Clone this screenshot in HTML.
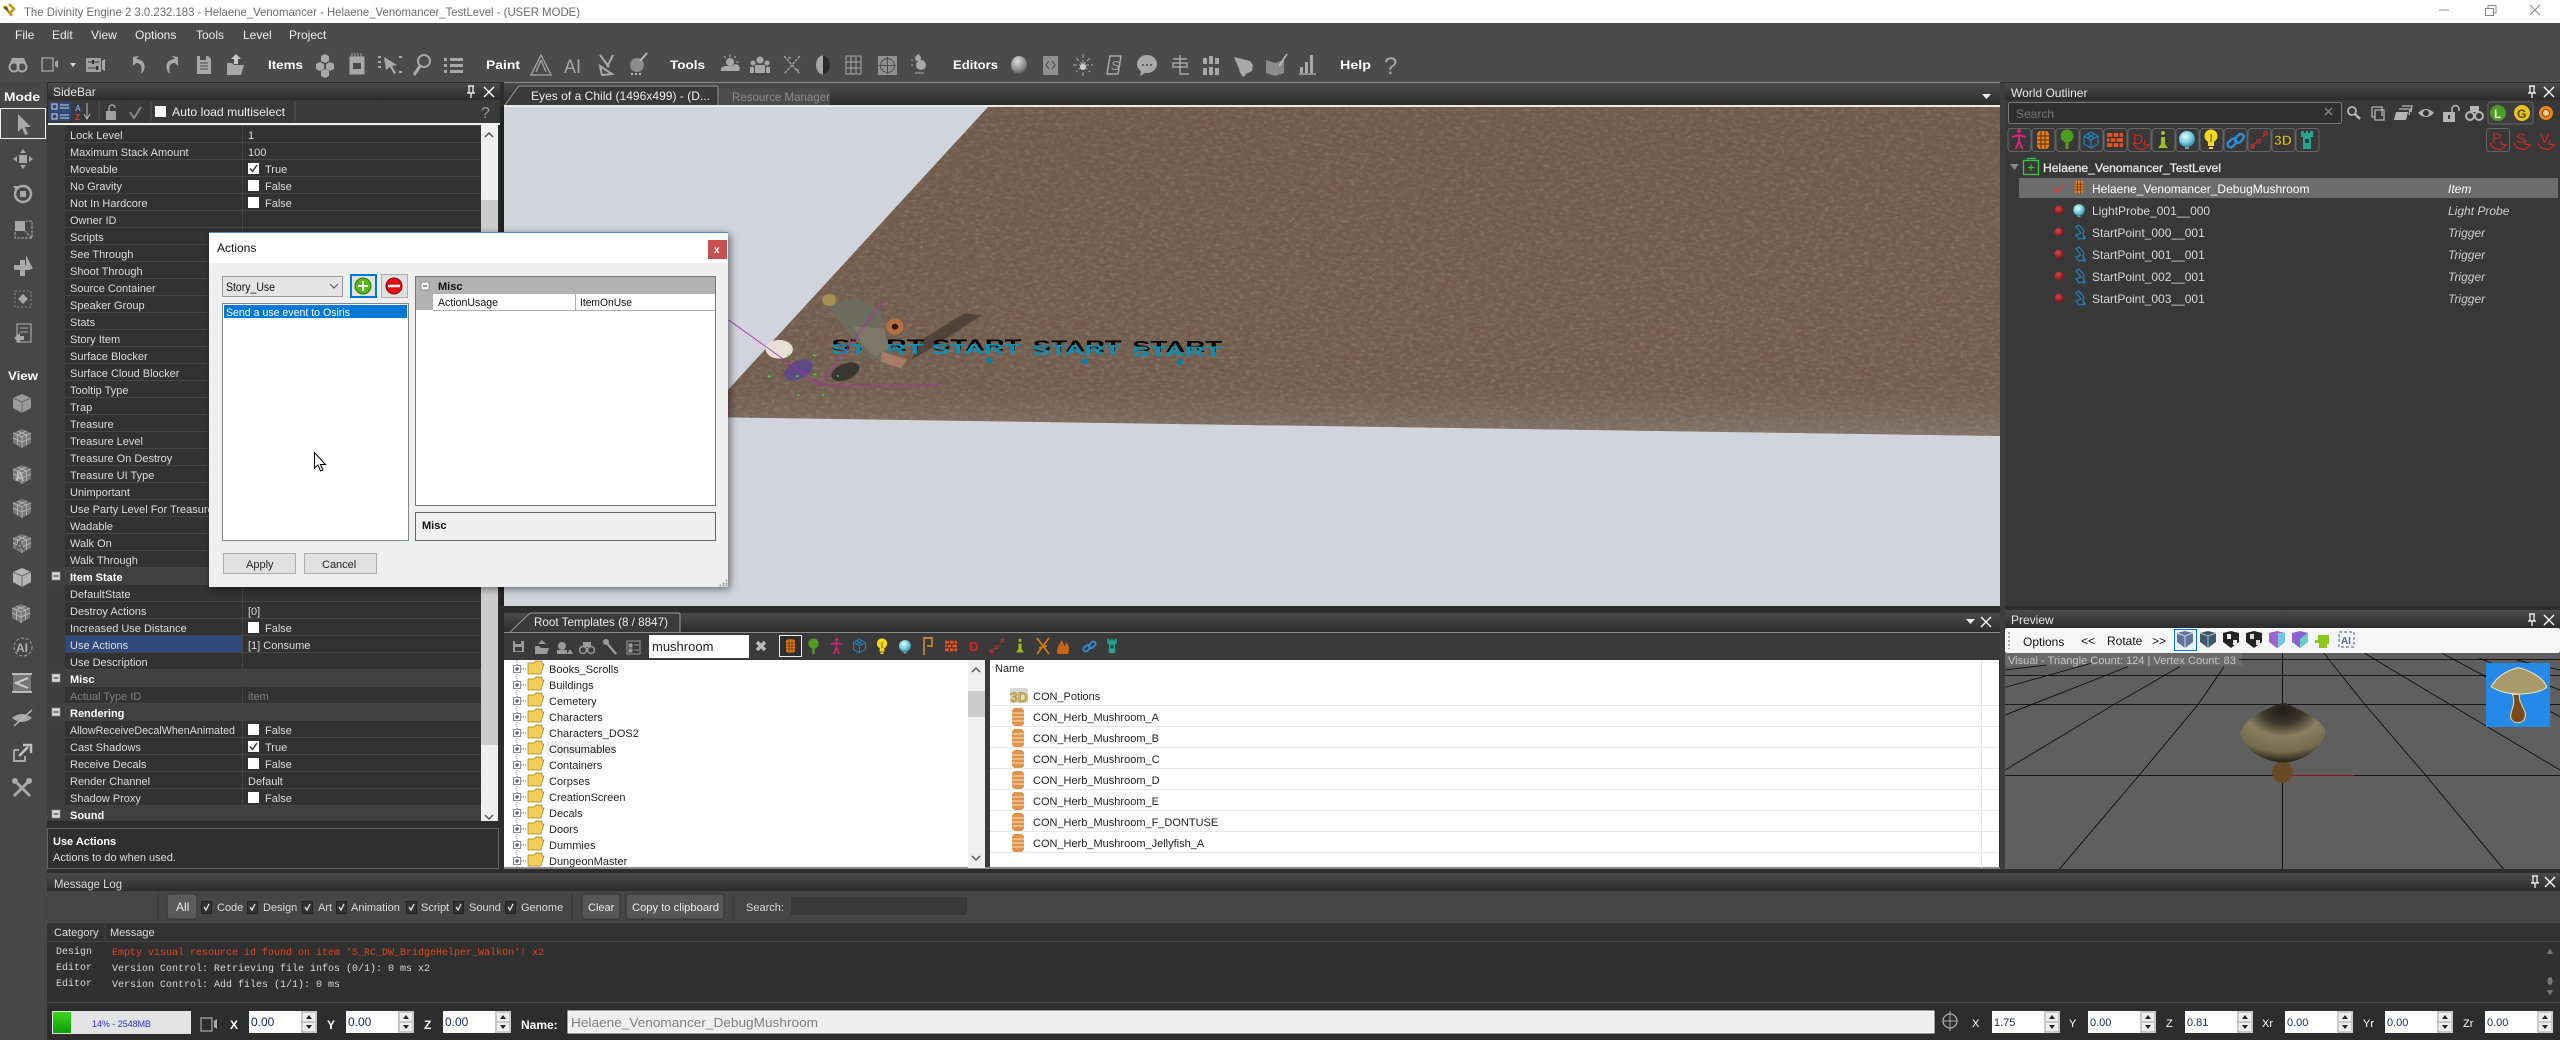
<!DOCTYPE html>
<html><head><meta charset="utf-8"><title>The Divinity Engine 2</title>
<style>
html,body{margin:0;padding:0;background:#2d2d2d;overflow:hidden}
svg{display:block}
text{font-family:"Liberation Sans",sans-serif;font-size:11px;fill:#dcdcdc}
.m{font-size:12px;fill:#ececec}
.b{font-weight:bold}
.w{fill:#fff}
.k{fill:#111}
.v{fill:#222}
.lg{font-family:"Liberation Mono",monospace;font-size:10px;fill:#d8d8d8}
.t{font-size:12px;fill:#d8d8d8}
.ty{font-size:12px;font-style:italic;fill:#cfcfcf}
.in{font-size:11px;fill:#1a2a66}
</style></head><body>
<svg width="2560" height="1040" viewBox="0 0 2560 1040" xmlns="http://www.w3.org/2000/svg">
<defs>
<linearGradient id="hd" x1="0" y1="0" x2="0" y2="1"><stop offset="0" stop-color="#4b4b4b"/><stop offset="1" stop-color="#2c2c2c"/></linearGradient>
<linearGradient id="fog" x1="0" y1="0" x2="0" y2="1"><stop offset="0" stop-color="#5e4a3c" stop-opacity=".12"/><stop offset=".8" stop-color="#6e5a4b" stop-opacity="0"/><stop offset="1" stop-color="#a09a96" stop-opacity=".4"/></linearGradient>
<linearGradient id="grn" x1="0" y1="0" x2="0" y2="1"><stop offset="0" stop-color="#37d81c"/><stop offset="1" stop-color="#149a08"/></linearGradient>
<radialGradient id="cap" cx=".5" cy=".12" r=".85"><stop offset="0" stop-color="#1e1c18"/><stop offset=".28" stop-color="#3e392c"/><stop offset=".52" stop-color="#8a7f60"/><stop offset=".82" stop-color="#746a4c"/><stop offset="1" stop-color="#2e2a1e"/></radialGradient>
<radialGradient id="pr" cx=".4" cy=".35" r=".7"><stop offset="0" stop-color="#e8fbff"/><stop offset=".6" stop-color="#6fc7dc"/><stop offset="1" stop-color="#2a7f96"/></radialGradient>
<radialGradient id="rd" cx=".4" cy=".35" r=".7"><stop offset="0" stop-color="#d84848"/><stop offset="1" stop-color="#7a0f12"/></radialGradient>
<radialGradient id="orb" cx=".4" cy=".3" r=".8"><stop offset="0" stop-color="#e0e0e0"/><stop offset=".7" stop-color="#808080"/><stop offset="1" stop-color="#3a3a3a"/></radialGradient>
<filter id="noise" x="0" y="0" width="100%" height="100%"><feTurbulence type="fractalNoise" baseFrequency=".16 .3" numOctaves="4" seed="7"/><feColorMatrix values="0 0 0 0 .28  0 0 0 0 .22  0 0 0 0 .17  .8 0 0 0 -.32"/></filter>
<filter id="noise2" x="0" y="0" width="100%" height="100%"><feTurbulence type="fractalNoise" baseFrequency=".2 .34" numOctaves="3" seed="3"/><feColorMatrix values="0 0 0 0 .56  0 0 0 0 .47  0 0 0 0 .39  .7 0 0 0 -.37"/></filter>
<filter id="sh" x="-5%" y="-5%" width="110%" height="110%"><feDropShadow dx="2" dy="2" stdDeviation="4" flood-color="#000" flood-opacity=".5"/></filter>
<clipPath id="floor"><path d="M988 107H2000V436L703 417Z"/></clipPath>
<clipPath id="vp"><rect x="504" y="107" width="1496" height="499"/></clipPath>
<pattern id="rows" x="0" y="126" width="10" height="17" patternUnits="userSpaceOnUse"><rect width="10" height="17" fill="#323232"/><rect y="16" width="10" height="1" fill="#454545"/></pattern>

<g id="pin"><path d="M-3-6H3M-2-6V1H2V-6M-4 1H4M0 1V6" stroke="#fff" stroke-width="1.2" fill="none"/></g>
<g id="x"><path d="M-5-5L5 5M5-5L-5 5" stroke="#fff" stroke-width="1.4"/></g>
<g id="bar"><rect x="-6" y="-9" width="12" height="18" rx="3.5" fill="#e8801a"/><path d="M-6-4H6M-6 0H6M-6 4H6M-2-9V9M2-9V9" stroke="#5a3208" stroke-width="1" fill="none"/></g>
<g id="bar2"><rect x="-6" y="-9" width="12" height="18" rx="3.5" fill="#de924a"/><path d="M-6-4H6M-6 0H6M-6 4H6" stroke="#f4d3b0" stroke-width="1.2" fill="none"/></g>
<g id="tree"><path d="M-1.5 10V1H1.5V10Z" fill="#5a9a2a"/><circle cy="-3" r="6.5" fill="#4f9a20"/></g>
<g id="man"><circle cy="-8" r="2" fill="#d6247c"/><path d="M0-5V2M0 2L-3.5 10M0 2L3.5 10M-7-2L0-4L7-2" stroke="#d6247c" stroke-width="2" fill="none"/></g>
<g id="cube"><path d="M0-8L7-4V4L0 8L-7 4V-4ZM-7-4L0 0L7-4M0 0V8M-3.5-6L3.5-2M3.5-6L-3.5-2" stroke="#1e86c8" stroke-width="1.1" fill="none"/></g>
<g id="brick"><rect x="-8" y="-7" width="16" height="14" fill="#e2542a"/><path d="M-8-2.5H8M-8 2.5H8M-2-7V-2.500M4-7V-2.500M-5-2.500V2.500M1-2.500V2.500M-2 2.500V7M4 2.500V7" stroke="#33302e" stroke-width="1.2"/></g>
<g id="info"><circle cy="-7" r="2" fill="#9abf1e"/><path d="M-2-3H2V4L5 8H-5L-2 4Z" fill="#9abf1e"/></g>
<g id="probe"><circle r="8" fill="url(#pr)"/><path d="M-2 8H2V10H-2Z" fill="#7a9aa6"/></g>
<g id="bulb"><circle cy="-3" r="6.500" fill="#f5d81e"/><path d="M-3 3H3V7H-3ZM-2 8H2V10H-2Z" fill="#f5d81e"/><path d="M0-5V3" stroke="#5a5000"/></g>
<g id="link"><g stroke="#2f8fd8" stroke-width="2.400" fill="none"><rect x="-8" y="-3" width="10" height="6" rx="3" transform="rotate(-45 -3 3) translate(0 3)"/><rect x="-2" y="-4" width="10" height="6" rx="3" transform="rotate(-45 3 -3)"/></g></g>
<g id="pth"><path d="M-7 7L-2 2M1 0L6-6" stroke="#d62c2c" stroke-dasharray="2 1.500" fill="none"/><path d="M-8 5h3v3h-3zM-2 0h3v3h-3zM5-8h3v3h-3z" fill="none" stroke="#d62c2c"/></g>
<g id="tower"><path d="M-6-9H-3V-7H-1V-9H1V-7H3V-9H6V-3H4V9H-4V-3H-6Z" fill="#2aa28e"/><rect x="-2" y="-1" width="4" height="4" fill="#0d4d44"/></g>
<g id="scr"><path d="M-8 2C-6 8 0 9 4 8L8 4L3 3L4-1" fill="none" stroke="#d82424" stroke-width="1.200"/></g>
<g id="fold"><path d="M0 2H6L8 0H14V3H16L13 13H0Z" fill="#f5cd5a" stroke="#a87c18" stroke-width=".7"/></g>
<g id="plus"><rect x="-3.500" y="-3.500" width="7" height="7" fill="#fff" stroke="#8a8a9a"/><path d="M-2 0H2M0-2V2" stroke="#334"/><path d="M4 0H9" stroke="#777" stroke-dasharray="1 1"/></g>
<g id="chk"><rect width="11" height="11" fill="#fff"/><path d="M2 5.500L4.500 8.500L9 2" stroke="#333" stroke-width="1.400" fill="none"/></g>
<g id="box"><rect width="11" height="11" fill="#fff"/></g>
<g id="minus"><rect width="8" height="8" fill="#d8d8d8" stroke="#999" stroke-width=".6"/><path d="M1.500 4H6.500" stroke="#222"/></g>
<g id="spin"><rect width="68" height="22" fill="#fff"/><rect x="52" width="16" height="22" fill="#c8c8c8"/><rect x="54" y="2" width="12" height="8" fill="#eee"/><rect x="54" y="12" width="12" height="8" fill="#eee"/><path d="M57 8L60 4L63 8ZM57 14L60 18L63 14Z" fill="#222"/></g>
<g id="dot"><circle r="4.500" fill="url(#rd)"/></g>
<g id="tri"><path d="M0-7L5-1L4 2L6 6L0 7L-3 3L2 1L-3-5Z" fill="none" stroke="#1e86c8" stroke-width="1.100"/><path d="M5 3V8M3 6H7" stroke="#1e86c8"/></g>
<g id="cb" fill="#9a9a9a"><path d="M0-9L9-5V5L0 10L-9 5V-5Z"/><path d="M-9-5L0-1L9-5M0-1V10" stroke="#666" fill="none"/></g>
<g id="cw"><path d="M0-9L9-5V5L0 10L-9 5V-5Z" fill="#777"/><path d="M-9-5L0-1L9-5M0-1V10M-9 0L0 4L9 0M-4.500-7L4.500-3M4.500-7L-4.500-3M-4.500-3V7M4.500-3V7" stroke="#b2b2b2" fill="none"/></g>
</defs>

<!-- base -->
<rect width="2560" height="1040" fill="#2d2d2d"/>
<rect width="2560" height="23" fill="#fff"/>
<path d="M4 6L12 16M9 4L14 9L10 13" stroke="#c89414" stroke-width="2.500" fill="none"/><path d="M3 8L7 6L9 12Z" fill="#6a5a10"/>
<text x="24" y="16" class="t" style="fill:#6b6b6b" textLength="556" lengthAdjust="spacingAndGlyphs">The Divinity Engine 2 3.0.232.183 - Helaene_Venomancer - Helaene_Venomancer_TestLevel - (USER MODE)</text>
<path d="M2439 10H2449" stroke="#999"/><path d="M2485.500 8.500H2493.500V15.500H2485.500ZM2488 8V5.500H2496V13H2494" fill="none" stroke="#888"/><path d="M2530 5L2540 15M2540 5L2530 15" stroke="#888"/>
<rect y="23" width="2560" height="59" fill="#4b4b4b"/>

<text x="15" y="39" class="m">File</text><text x="52" y="39" class="m">Edit</text><text x="91" y="39" class="m">View</text><text x="135" y="39" class="m">Options</text><text x="196" y="39" class="m">Tools</text><text x="243" y="39" class="m">Level</text><text x="289" y="39" class="m">Project</text>

<!-- top toolbar -->
<g fill="#a8a8a8" stroke="none">
<g transform="translate(18 65)"><circle cx="-4" cy="2" r="4.500" fill="none" stroke="#a8a8a8" stroke-width="2"/><circle cx="4" cy="2" r="4.500" fill="none" stroke="#a8a8a8" stroke-width="2"/><path d="M-6-7H6L8-2H-8Z"/></g>
<path d="M42 58h11v13h-11z" fill="none" stroke="#a8a8a8" stroke-width="1.300"/><path d="M55 62l3-2v8l-3-2z"/>
<path d="M70 63h6l-3 4z" fill="#ddd"/>
<g transform="translate(95 65)"><rect x="-9" y="-7" width="15" height="14" fill="#a0a0a0"/><path d="M-7-3H4M-7 3H4" stroke="#3c3c3c"/><rect x="-3" y="-5" width="2" height="4" fill="#333"/><rect x="1" y="1" width="2" height="4" fill="#333"/><path d="M7-4l3-2v12l-3-2z"/></g>
<path d="M133 57v9l3-3c4 0 7 2 5 11c5-4 5-12-1-14c-2-1-3-1-4-1l3-3z"/>
<path d="M178 57v9l-3-3c-4 0-7 2-5 11c-5-4-5-12 1-14c2-1 3-1 4-1l-3-3z"/>
<path d="M197 56h11l3 3v15h-14z"/><path d="M200 63h8M200 66h8M200 69h8" stroke="#4b4b4b"/><rect x="200" y="56" width="6" height="4" fill="#4b4b4b"/>
<path d="M227 63h5l2 2h10l-3 10h-14z"/><path d="M236 54l5 5h-3v5h-4v-5h-3z" fill="#c9c9c9"/>
<text x="268" y="69" class="m b w" textLength="35" lengthAdjust="spacingAndGlyphs">Items</text>
<g transform="translate(325 66)"><path d="M-4-10L0-12L4-10L4-5L0-3L-4-5Z"/><path d="M-9-2L-5-4L-1-2V3L-5 5L-9 3Z"/><path d="M1-2L5-4L9-2V3L5 5L1 3Z"/><path d="M-4 5L0 3L4 5V10L0 12L-4 10Z"/></g>
<path d="M350 57h14v17h-14zM352 53v4M355 53v4M358 53v4M361 53v4" stroke="#a8a8a8"/><rect x="353" y="63" width="8" height="6" fill="#4b4b4b"/>
<path d="M384 57l13 8-5 1 4 7-2 1-4-7-4 3z"/><path d="M378 57h3M378 62h3M378 67h3M399 57h3M399 72h3" stroke="#a8a8a8" stroke-width="2"/>
<circle cx="424" cy="61" r="6" fill="none" stroke="#a8a8a8" stroke-width="2"/><path d="M420 66l-6 9" stroke="#a8a8a8" stroke-width="3"/>
<path d="M444 58h3v3h-3zM450 58h13v3h-13zM444 64h3v3h-3zM450 64h13v3h-13zM444 70h3v3h-3zM450 70h13v3h-13z"/>
<text x="486" y="69" class="m b w" textLength="34" lengthAdjust="spacingAndGlyphs">Paint</text>
<path d="M541 55l10 20h-20zM541 60l-5 12M541 60l5 12" fill="none" stroke="#a8a8a8" stroke-width="1.300"/>
<text x="564" y="73" style="font-size:19px;fill:#a8a8a8" textLength="17" lengthAdjust="spacingAndGlyphs">AI</text>
<path d="M600 55l9 12M613 55l-6 12M600 66l12 8-10 1z" fill="none" stroke="#a8a8a8" stroke-width="2"/>
<g transform="translate(637 65)"><circle r="7" fill="#8c8c8c"/><path d="M3-4L10-12M-6 9h2M-2 9h2M2 9h2" stroke="#bbb" stroke-width="2"/></g>
<text x="670" y="69" class="m b w" textLength="35" lengthAdjust="spacingAndGlyphs">Tools</text>
<g transform="translate(730 65)"><path d="M-9 6a5 4 0 0 1 5-5h6a4 4 0 0 1 7 5z"/><circle cy="-3" r="4"/><path d="M0-11V-8M6-9L4-7M-6-9L-4-7M9-3H6" stroke="#a8a8a8"/></g>
<g transform="translate(760 65)"><circle cy="-5" r="3.500"/><circle cx="-7" cy="-2" r="2.500"/><circle cx="7" cy="-2" r="2.500"/><path d="M-5 8V0H5V8ZM-10 8V2H-6V8ZM6 8V2H10V8Z"/></g>
<path d="M784 56l16 18M800 56l-16 18M788 58h3M796 70h3" stroke="#a8a8a8" stroke-width="1.300" stroke-dasharray="3 1"/>
<ellipse cx="823" cy="65" rx="7" ry="9.500"/><path d="M823 55.500a7 9.500 0 0 1 0 19z" fill="#2a2a2a"/>
<path d="M846 56h15v18h-15zM851 56v18M856 56v18M846 62h15M846 68h15" fill="none" stroke="#a8a8a8"/>
<rect x="878" y="56" width="19" height="19" fill="#909090"/><circle cx="887.500" cy="65.500" r="7" fill="none" stroke="#4b4b4b"/><path d="M887.500 57V74M879 65.500H896" stroke="#4b4b4b"/>
<g transform="translate(919 65)"><circle r="5" cx="2"/><circle r="3" cx="-1" cy="-7"/><path d="M-4 8h9M-8-5h2M-8 0h2M0-11l-2 2" stroke="#a8a8a8"/></g>
<text x="953" y="69" class="m b w" textLength="45" lengthAdjust="spacingAndGlyphs">Editors</text>
<ellipse cx="1019" cy="65" rx="8" ry="9" fill="url(#orb)"/>
<rect x="1043" y="56" width="15" height="19" fill="#909090"/><path d="M1049 61l-3 4 3 4M1052 61l3 4-3 4" stroke="#444" fill="none"/>
<path d="M1083 54V76M1073 65H1093M1076 58L1090 72M1090 58L1076 72" stroke="#a8a8a8" stroke-dasharray="4 2"/><circle cx="1083" cy="67" r="3" fill="#ccc"/>
<path d="M1107 74l3-18h11l-3 18z" fill="none" stroke="#a8a8a8" stroke-width="1.500"/><text x="1111" y="70" style="font-size:13px;font-style:italic;fill:#a8a8a8">S</text>
<ellipse cx="1147" cy="64" rx="10" ry="9"/><path d="M1141 71l-1 5 5-3z"/><path d="M1142 65h2M1146 65h2M1150 65h2" stroke="#4b4b4b" stroke-width="1.500"/>
<path d="M1173 59h14M1173 63h14v4h-14zM1180 55v14M1180 69v5h9" fill="none" stroke="#a8a8a8" stroke-width="1.400"/>
<path d="M1203 58h4v6h-4zM1209 56h4v8h-4zM1215 58h4v6h-4zM1203 68h4v7h-4zM1209 67h4v8h-4zM1215 68h4v7h-4z"/>
<path d="M1234 57l16 4 3 4-1 6-8 4-2 1z"/><path d="M1239 71l7 4-3 2z"/>
<path d="M1266 60l9 3v13l-9-3zM1275 63l9-3v13l-9 3z" fill="#8a8a8a"/><path d="M1279 66l8-12" stroke="#c0c0c0" stroke-width="1.500"/>
<path d="M1299 74h17" stroke="#a8a8a8" stroke-width="1.500"/><path d="M1300 67h3v6h-3zM1305 62h3v11h-3zM1310 55h3v18h-3z"/>
<text x="1340" y="69" class="m b w" textLength="31" lengthAdjust="spacingAndGlyphs">Help</text>
<text x="1384" y="74" style="font-size:24px;fill:#a8a8a8">?</text>
</g>

<!-- left bar -->
<rect y="82" width="47" height="958" fill="#474747"/>
<text x="4" y="101" class="m b w" textLength="36" lengthAdjust="spacingAndGlyphs">Mode</text>
<rect x=".5" y="108.500" width="45" height="30" fill="#4b4b4b" stroke="#eee"/>
<g fill="#a8a8a8">
<path d="M18 114v18l4-4 3 7 3-1-3-7h6z"/>
<g transform="translate(23 159)"><path d="M0-10L3-6H-3ZM0 10L3 6H-3ZM-10 0L-6-3V3ZM10 0L6-3V3Z"/><rect x="-4" y="-4" width="8" height="8"/></g>
<g transform="translate(23 194)"><circle r="8" fill="none" stroke="#a8a8a8" stroke-width="2.500"/><rect x="-3" y="-3" width="6" height="6"/><path d="M-10-8l5 0-1 5z" fill="#a8a8a8"/></g>
<g transform="translate(23 229)"><rect x="-8" y="-8" width="10" height="10"/><path d="M-8 3v6h17v-17h-6M9 9L2 2" fill="none" stroke="#a8a8a8" stroke-dasharray="3 1"/></g>
<g transform="translate(23 265)"><path d="M3-10l7 14h-7z"/><path d="M-9 0h6v-5h5v5h5v5h-5v6h-5v-6h-6z"/></g>
<g transform="translate(23 299)"><rect x="-8" y="-8" width="16" height="16" fill="none" stroke="#8a8a8a" stroke-dasharray="2 2"/><path d="M0-5L5 0L0 5L-5 0Z"/></g>
<g transform="translate(23 334)"><rect x="-6" y="-10" width="14" height="18" fill="none" stroke="#a8a8a8" stroke-width="1.200"/><path d="M-3-6H5M-3-2H5" stroke="#a8a8a8"/><path d="M-9 4l6-5v3h4v4h-4v3z"/></g>
<text x="8" y="380" class="m b w" textLength="30" lengthAdjust="spacingAndGlyphs">View</text>
<use href="#cb" x="22" y="403"/><use href="#cw" x="22" y="438"/>
<use href="#cw" x="22" y="474"/><text x="15" y="481" class="b" style="font-size:13px;fill:#bdbdbd">A</text>
<use href="#cw" x="22" y="508"/><use href="#cw" x="22" y="543"/><text x="15" y="550" class="b" style="font-size:13px;fill:#5a5a5a">A</text>
<g transform="translate(22 577)"><path d="M0-9L9-5V5L0 10L-9 5V-5Z" fill="#b4b4b4"/><path d="M-9-5L0-1L9-5M0-1V10" stroke="#666" fill="none"/></g>
<use href="#cw" x="21" y="613"/>
<circle cx="23" cy="647" r="9" fill="none" stroke="#a0a0a0" stroke-dasharray="3 2"/><text x="16" y="652" class="b" style="font-size:12px;fill:#b0b0b0">AI</text>
<g transform="translate(22 683)"><rect x="-9" y="-9" width="18" height="18" fill="#777"/><path d="M-10-9H10M-10 9H10" stroke="#bbb" stroke-width="2"/><path d="M6-5L-6 0L6 5" fill="none" stroke="#ccc" stroke-width="2"/></g>
<g transform="translate(22 718)"><path d="M-10 0Q0-8 10 0Q0 8-10 0Z"/><path d="M-8 8L10-8" stroke="#bbb" stroke-width="1.500"/></g>
<g transform="translate(22 753)"><path d="M-8-3h5M3 3v5h-11v-11" fill="none" stroke="#a8a8a8" stroke-width="2"/><path d="M-3 3L6-6M1-8h8v8" fill="none" stroke="#c0c0c0" stroke-width="2.500"/></g>
<g transform="translate(22 788)"><path d="M-8-8L8 8M8-8L-8 8" stroke="#a8a8a8" stroke-width="3"/><circle cx="-7" cy="-7" r="3"/><circle cx="7" cy="-7" r="3"/></g>
</g>

<!-- sidebar -->
<rect x="48" y="83" width="452" height="17" fill="url(#hd)"/>
<text x="53" y="96" class="m" style="fill:#e2e2e2">SideBar</text>
<use href="#pin" x="471" y="92"/><use href="#x" x="489" y="92"/>
<rect x="48" y="100" width="452" height="23" fill="#3a3a3a"/>
<rect x="49" y="102" width="22" height="19" fill="#2e4a7c"/>
<path d="M52 104h5v5h-5zM52 114h5v5h-5zM60 105h9M60 108h9M60 115h9M60 118h9" fill="none" stroke="#d0d0d0"/>
<text x="75" y="111" style="font-size:8px;fill:#7aa0e0" class="b">A</text><text x="75" y="120" style="font-size:8px;fill:#d04040" class="b">Z</text><path d="M87 103V118M84 114l3 5 3-5" stroke="#bbb" fill="none"/>
<path d="M99 102V121M151 102V121M295 102V121" stroke="#555"/>
<path d="M106 111h10v9h-10z" fill="#a0a0a0"/><path d="M109 111v-3a3 3 0 0 1 6 0" stroke="#a0a0a0" fill="none" stroke-width="1.500"/>
<path d="M130 112l4 6 7-11" stroke="#8a8a8a" stroke-width="2" fill="none"/>
<rect x="155" y="106" width="11" height="11" fill="#fff"/>
<text x="172" y="116" class="m" textLength="113" lengthAdjust="spacingAndGlyphs">Auto load multiselect</text>
<text x="481" y="118" style="font-size:16px;fill:#999">?</text>
<rect x="48" y="123" width="452" height="2" fill="#f0f0f0"/>

<rect x="47" y="125" width="434" height="696" fill="url(#rows)"/>
<rect x="47" y="125" width="18" height="696" fill="#3e3e3e"/>
<rect x="242" y="125" width="1" height="696" fill="#474747"/>
<rect x="47" y="568" width="434" height="17" fill="#404040"/><rect x="47" y="670" width="434" height="17" fill="#404040"/><rect x="47" y="704" width="434" height="17" fill="#404040"/><rect x="47" y="806" width="434" height="15" fill="#404040"/>
<rect x="65" y="636" width="177" height="16" fill="#2e4a7c"/>
<g>
<text x="70" y="139">Lock Level</text><text x="248" y="139">1</text>
<text x="70" y="156">Maximum Stack Amount</text><text x="248" y="156">100</text>
<text x="70" y="173">Moveable</text><use href="#chk" x="248" y="163"/><text x="265" y="173">True</text>
<text x="70" y="190">No Gravity</text><use href="#box" x="248" y="180"/><text x="265" y="190">False</text>
<text x="70" y="207">Not In Hardcore</text><use href="#box" x="248" y="197"/><text x="265" y="207">False</text>
<text x="70" y="224">Owner ID</text><text x="70" y="241">Scripts</text><text x="70" y="258">See Through</text><text x="70" y="275">Shoot Through</text><text x="70" y="292">Source Container</text><text x="70" y="309">Speaker Group</text><text x="70" y="326">Stats</text><text x="70" y="343">Story Item</text><text x="70" y="360">Surface Blocker</text><text x="70" y="377">Surface Cloud Blocker</text><text x="70" y="394">Tooltip Type</text><text x="70" y="411">Trap</text><text x="70" y="428">Treasure</text><text x="70" y="445">Treasure Level</text><text x="70" y="462">Treasure On Destroy</text><text x="70" y="479">Treasure UI Type</text><text x="70" y="496">Unimportant</text><text x="70" y="513">Use Party Level For Treasure</text><text x="70" y="530">Wadable</text><text x="70" y="547">Walk On</text><text x="70" y="564">Walk Through</text>
<use href="#minus" x="52" y="572"/><text x="70" y="581" class="b w">Item State</text>
<text x="70" y="598">DefaultState</text>
<text x="70" y="615">Destroy Actions</text><text x="248" y="615">[0]</text>
<text x="70" y="632">Increased Use Distance</text><use href="#box" x="248" y="622"/><text x="265" y="632">False</text>
<text x="70" y="649">Use Actions</text><text x="248" y="649">[1] Consume</text>
<text x="70" y="666">Use Description</text>
<use href="#minus" x="52" y="674"/><text x="70" y="683" class="b w">Misc</text>
<text x="70" y="700" style="fill:#808080">Actual Type ID</text><text x="248" y="700" style="fill:#808080">item</text>
<use href="#minus" x="52" y="708"/><text x="70" y="717" class="b w">Rendering</text>
<text x="70" y="734" textLength="165" lengthAdjust="spacingAndGlyphs">AllowReceiveDecalWhenAnimated</text><use href="#box" x="248" y="724"/><text x="265" y="734">False</text>
<text x="70" y="751">Cast Shadows</text><use href="#chk" x="248" y="741"/><text x="265" y="751">True</text>
<text x="70" y="768">Receive Decals</text><use href="#box" x="248" y="758"/><text x="265" y="768">False</text>
<text x="70" y="785">Render Channel</text><text x="248" y="785">Default</text>
<text x="70" y="802">Shadow Proxy</text><use href="#box" x="248" y="792"/><text x="265" y="802">False</text>
<use href="#minus" x="52" y="810"/><text x="70" y="819" class="b w">Sound</text>
</g>
<rect x="481" y="125" width="17" height="696" fill="#efefef"/><rect x="481" y="200" width="17" height="545" fill="#cdcdcd"/>
<path d="M485 137l4-4 4 4M485 815l4 4 4-4" stroke="#555" stroke-width="1.500" fill="none"/>
<rect x="47.500" y="828.500" width="451" height="40" fill="#2f2f2f" stroke="#666"/>
<text x="53" y="845" class="b w">Use Actions</text><text x="53" y="861">Actions to do when used.</text>

<!-- viewport tabs -->
<rect x="504" y="82" width="1496" height="1" fill="#8a8a8a"/>
<rect x="504" y="83" width="1496" height="22" fill="url(#hd)"/>
<path d="M505 105L518 87Q519 86 521 86H716Q718 86 718 88V105" fill="#3a3a3a" stroke="#9a9a9a"/>
<text x="531" y="100" class="m" textLength="179" lengthAdjust="spacingAndGlyphs">Eyes of a Child (1496x499) - (D...</text>
<rect x="719" y="88" width="111" height="17" fill="#4c4c4c"/>
<text x="732" y="101" class="m" style="fill:#8c8c8c" textLength="98" lengthAdjust="spacingAndGlyphs">Resource Manager</text>
<path d="M1982 94h9l-4.500 5z" fill="#eee"/>
<rect x="504" y="105" width="1496" height="2" fill="#e8e8e8"/>
<rect x="500" y="107" width="4" height="499" fill="#222"/>

<!-- 3D viewport -->
<g clip-path="url(#vp)">
<rect x="504" y="107" width="1496" height="499" fill="#d1d4dd"/>
<g clip-path="url(#floor)">
<rect x="700" y="107" width="1300" height="330" fill="#715c4d"/>
<rect x="700" y="107" width="1300" height="330" filter="url(#noise)"/>
<rect x="700" y="107" width="1300" height="330" filter="url(#noise2)"/>
<rect x="700" y="107" width="1300" height="330" fill="url(#fog)"/>
</g>
<svg x="700" y="270" width="560" height="160" viewBox="0 0 1568 480" preserveAspectRatio="none">
<path d="M640 240L790 135L740 130L620 210L590 270Z" fill="#4a3d34" opacity=".85"/>
<text x="368" y="242" textLength="260" lengthAdjust="spacingAndGlyphs" style="font-size:48px;font-weight:bold;fill:#000">START</text>
<text x="650" y="242" textLength="250" lengthAdjust="spacingAndGlyphs" style="font-size:48px;font-weight:bold;fill:#000">START</text>
<text x="932" y="244" textLength="248" lengthAdjust="spacingAndGlyphs" style="font-size:48px;font-weight:bold;fill:#000">START</text>
<text x="1210" y="246" textLength="252" lengthAdjust="spacingAndGlyphs" style="font-size:48px;font-weight:bold;fill:#000">START</text>
<text x="366" y="252" textLength="260" lengthAdjust="spacingAndGlyphs" style="font-size:44px;font-weight:bold;fill:#0a90b4">START</text>
<text x="648" y="252" textLength="250" lengthAdjust="spacingAndGlyphs" style="font-size:44px;font-weight:bold;fill:#0a90b4">START</text>
<text x="930" y="255" textLength="248" lengthAdjust="spacingAndGlyphs" style="font-size:44px;font-weight:bold;fill:#0a90b4">START</text>
<text x="1208" y="260" textLength="252" lengthAdjust="spacingAndGlyphs" style="font-size:44px;font-weight:bold;fill:#0a90b4">START</text>
<circle cx="542" cy="269" r="9" fill="#0a7ea6"/><circle cx="810" cy="271" r="9" fill="#0a7ea6"/><circle cx="1078" cy="274" r="9" fill="#0a7ea6"/><circle cx="1344" cy="277" r="9" fill="#0a7ea6"/>
<path d="M360 110L395 95L445 85L510 130L505 175L515 230L540 250L505 270L470 262L435 210L395 160Z" fill="#6b6b5e"/>
<path d="M430 170L515 175L530 235L490 260L455 225Z" fill="#7d7868"/>
<path d="M510 245L580 268L562 295L505 275Z" fill="#a87a68"/>
<ellipse cx="362" cy="90" rx="20" ry="18" fill="#a89050"/>
<circle cx="546" cy="170" r="24" fill="#c8703a" opacity=".8"/><circle cx="546" cy="170" r="9" fill="#2a1a10"/>
<ellipse cx="222" cy="238" rx="38" ry="28" fill="#e8e0d4"/>
<ellipse cx="276" cy="300" rx="44" ry="26" fill="#5e4a84" transform="rotate(-30 276 300)"/>
<ellipse cx="407" cy="305" rx="42" ry="24" fill="#3a3630" transform="rotate(-25 407 305)"/>
<path d="M80 150L335 345L515 90M335 345H670" stroke="#b42ab4" stroke-width="2.500" fill="none"/>
<path d="M244 255l8 2M316 255l8 3M190 318l8 2M268 320l8-3M318 315l8-3M384 316l4 4M272 375l6 1M342 376l6-3" stroke="#2ef02e" stroke-width="4" fill="none"/>
</svg>
</g>

<!-- root templates -->
<rect x="504" y="613" width="1496" height="19" fill="url(#hd)"/>
<path d="M510 632L529 614Q530 613 532 613H678Q680 613 680 615V632" fill="#3a3a3a" stroke="#9a9a9a"/>
<text x="534" y="626" class="m" textLength="134" lengthAdjust="spacingAndGlyphs">Root Templates (8 / 8847)</text>
<path d="M1966 619h9l-4.500 5z" fill="#eee"/><use href="#x" x="1986" y="622"/>
<rect x="504" y="632" width="1496" height="1" fill="#8a8a8a"/>
<rect x="504" y="633" width="1496" height="27" fill="#3a3a3a"/>
<g fill="#9a9a9a">
<path d="M513 641h11v11h-11z"/><rect x="515" y="641" width="6" height="3" fill="#3a3a3a"/><rect x="515" y="647" width="7" height="4" fill="#3a3a3a"/>
<path d="M535 646h4l2 2h8l-2 6h-12z"/><path d="M542 640l4 4h-8z"/>
<circle cx="562" cy="646" r="4"/><path d="M557 654v-4h10v4zM570 649l3 5h-6z"/>
<circle cx="583" cy="650" r="3.500" fill="none" stroke="#9a9a9a" stroke-width="1.500"/><circle cx="591" cy="650" r="3.500" fill="none" stroke="#9a9a9a" stroke-width="1.500"/><rect x="583" y="642" width="8" height="5"/>
<path d="M605 641l11 13" stroke="#9a9a9a" stroke-width="2.500"/><circle cx="606" cy="642" r="3"/>
<rect x="627" y="641" width="13" height="13" fill="none" stroke="#9a9a9a"/><path d="M629 644h3v3h-3zM629 649h3v3h-3zM634 645h5M634 650h5" stroke="#9a9a9a"/>
</g>
<rect x="649" y="635" width="100" height="23" fill="#fff"/>
<text x="652" y="651" style="font-size:13px;fill:#222">mushroom</text>
<path d="M757 642l8 8M765 642l-8 8" stroke="#b8b8b8" stroke-width="3.500"/>
<rect x="779.500" y="635.500" width="22" height="21" fill="#2f2f2f" stroke="#eee"/>
<g>
<use href="#bar" transform="translate(790.500 646) scale(.75)"/>
<use href="#tree" transform="translate(813.500 646) scale(.8)"/>
<use href="#man" transform="translate(836.500 646) scale(.8)"/>
<use href="#cube" transform="translate(859.500 646) scale(.85)"/>
<use href="#bulb" transform="translate(882 646) scale(.8)"/>
<use href="#probe" transform="translate(905 646) scale(.75)"/>
<path d="M924 655V638h8v8h-5" fill="none" stroke="#b47b3a" stroke-width="2"/>
<use href="#brick" transform="translate(951 646) scale(.75)"/>
<text x="969" y="651" class="b" style="font-size:13px;fill:#d82424">D</text>
<use href="#pth" transform="translate(997 646) scale(.85)"/>
<use href="#info" transform="translate(1020 646) scale(.8)"/>
<path d="M1037 638l12 16M1049 638l-12 16M1039 648l8-2" stroke="#d07a18" stroke-width="1.800" fill="none"/>
<path d="M1058 654c-3-6 2-8 3-14c3 3 3 4 3 6c2-1 2-3 2-4c3 3 4 8 2 12z" fill="#c8641a"/>
<use href="#link" transform="translate(1089 646) scale(.75)"/>
<use href="#tower" transform="translate(1112 646) scale(.8)"/>
</g>

<rect x="504" y="660" width="481" height="208" fill="#fff"/>
<rect x="990" y="660" width="1009" height="208" fill="#fff"/>
<rect x="985" y="660" width="5" height="208" fill="#3a3a3a"/>
<rect x="504" y="867" width="1496" height="2" fill="#888"/>
<g fill="#000"><path d="M517 660V868" stroke="#888" stroke-dasharray="1 1"/>
<use href="#plus" x="517" y="669"/><use href="#fold" x="528" y="661"/><text x="549" y="673" class="v">Books_Scrolls</text>
<use href="#plus" x="517" y="685"/><use href="#fold" x="528" y="677"/><text x="549" y="689" class="v">Buildings</text>
<use href="#plus" x="517" y="701"/><use href="#fold" x="528" y="693"/><text x="549" y="705" class="v">Cemetery</text>
<use href="#plus" x="517" y="717"/><use href="#fold" x="528" y="709"/><text x="549" y="721" class="v">Characters</text>
<use href="#plus" x="517" y="733"/><use href="#fold" x="528" y="725"/><text x="549" y="737" class="v">Characters_DOS2</text>
<use href="#plus" x="517" y="749"/><use href="#fold" x="528" y="741"/><rect x="547" y="741" width="67" height="16" fill="#f0f0f0"/><text x="549" y="753" class="v">Consumables</text>
<use href="#plus" x="517" y="765"/><use href="#fold" x="528" y="757"/><text x="549" y="769" class="v">Containers</text>
<use href="#plus" x="517" y="781"/><use href="#fold" x="528" y="773"/><text x="549" y="785" class="v">Corpses</text>
<use href="#plus" x="517" y="797"/><use href="#fold" x="528" y="789"/><text x="549" y="801" class="v">CreationScreen</text>
<use href="#plus" x="517" y="813"/><use href="#fold" x="528" y="805"/><text x="549" y="817" class="v">Decals</text>
<use href="#plus" x="517" y="829"/><use href="#fold" x="528" y="821"/><text x="549" y="833" class="v">Doors</text>
<use href="#plus" x="517" y="845"/><use href="#fold" x="528" y="837"/><text x="549" y="849" class="v">Dummies</text>
<use href="#plus" x="517" y="861"/><use href="#fold" x="528" y="853"/><text x="549" y="865" class="v">DungeonMaster</text>
</g>
<rect x="968" y="660" width="17" height="208" fill="#f0f0f0"/><rect x="968" y="691" width="17" height="26" fill="#cdcdcd"/>
<path d="M972 672l4-4 4 4M972 856l4 4 4-4" stroke="#555" stroke-width="1.500" fill="none"/>
<text x="995" y="672" class="v">Name</text>
<path d="M990 705.500H1999M990 726.500H1999M990 747.500H1999M990 768.500H1999M990 789.500H1999M990 810.500H1999M990 831.500H1999M990 852.500H1999M1981.500 660V868" stroke="#e8e8e8"/>
<rect x="1010" y="688" width="18" height="15" rx="2" fill="#d8d8d8"/>
<text x="1010" y="702" class="b" style="font-size:14px;fill:#d8b838;stroke:#8a7a30;stroke-width:.4">3D</text>
<text x="1033" y="700" class="v">CON_Potions</text>
<use href="#bar2" x="1018" y="717"/><text x="1033" y="721" class="v">CON_Herb_Mushroom_A</text>
<use href="#bar2" x="1018" y="738"/><text x="1033" y="742" class="v">CON_Herb_Mushroom_B</text>
<use href="#bar2" x="1018" y="759"/><text x="1033" y="763" class="v">CON_Herb_Mushroom_C</text>
<use href="#bar2" x="1018" y="780"/><text x="1033" y="784" class="v">CON_Herb_Mushroom_D</text>
<use href="#bar2" x="1018" y="801"/><text x="1033" y="805" class="v">CON_Herb_Mushroom_E</text>
<use href="#bar2" x="1018" y="822"/><text x="1033" y="826" class="v">CON_Herb_Mushroom_F_DONTUSE</text>
<use href="#bar2" x="1018" y="843"/><text x="1033" y="847" class="v">CON_Herb_Mushroom_Jellyfish_A</text>

<!-- world outliner -->
<rect x="2000" y="83" width="5" height="787" fill="#3d3d3d"/>
<rect x="2005" y="83" width="555" height="17" fill="url(#hd)"/>
<text x="2011" y="97" class="m" style="fill:#e8e8e8">World Outliner</text>
<use href="#pin" x="2532" y="92"/><use href="#x" x="2549" y="92"/>
<rect x="2005" y="100" width="555" height="506" fill="#383838"/>
<rect x="2008.500" y="102.500" width="333" height="21" rx="2" fill="#2f2f2f" stroke="#7a7a7a"/>
<text x="2016" y="118" class="m" style="fill:#777">Search</text>
<path d="M2325 108l7 7M2332 108l-7 7" stroke="#888" stroke-width="1.300"/>
<g fill="#b4b4b4">
<circle cx="2352" cy="111" r="4" fill="none" stroke="#b4b4b4" stroke-width="1.800"/><path d="M2355 114l5 5" stroke="#b4b4b4" stroke-width="2.500"/>
<path d="M2372 107h10v9M2375 110h9v10h-9zM2372 107v10h3" fill="none" stroke="#b4b4b4" stroke-width="1.300"/>
<path d="M2396 112h12l-2 8h-12z"/><path d="M2399 109h11l-1 6M2402 106h10l-1 6" fill="none" stroke="#b4b4b4" stroke-width="1.300"/>
<path d="M2418 113Q2426 105 2434 113Q2426 121 2418 113Z"/><circle cx="2426" cy="113" r="3" fill="#333"/>
<path d="M2443 112h12v10h-12z"/><path d="M2452 112v-3a3.500 3.500 0 0 1 7 0v2" fill="none" stroke="#b4b4b4" stroke-width="1.500"/><rect x="2448" y="115" width="2" height="4" fill="#333"/>
<circle cx="2470" cy="116" r="4" fill="none" stroke="#b4b4b4" stroke-width="2"/><circle cx="2479" cy="116" r="4" fill="none" stroke="#b4b4b4" stroke-width="2"/><rect x="2470" y="106" width="9" height="6"/>
</g>
<rect x="2488" y="102" width="45" height="22" rx="2" fill="#3d3d3d" stroke="#666"/>
<circle cx="2498" cy="113" r="8" fill="#4f9a2a"/><text x="2494" y="118" class="b" style="font-size:12px;fill:#e6f0c0">L</text>
<circle cx="2522" cy="113" r="8" fill="#e8c420"/><text x="2517" y="118" class="b" style="font-size:12px;fill:#5a4a08">G</text>
<circle cx="2546" cy="113" r="7" fill="#e6881e"/><circle cx="2546" cy="113" r="3.500" fill="#f0d090" stroke="#8a4a08"/>
<g fill="none" stroke="#666"><rect x="2008" y="128.500" width="23" height="23" rx="3"/><rect x="2032" y="128.500" width="23" height="23" rx="3"/><rect x="2056" y="128.500" width="23" height="23" rx="3"/><rect x="2080" y="128.500" width="23" height="23" rx="3"/><rect x="2104" y="128.500" width="23" height="23" rx="3"/><rect x="2128" y="128.500" width="23" height="23" rx="3"/><rect x="2152" y="128.500" width="23" height="23" rx="3"/><rect x="2176" y="128.500" width="23" height="23" rx="3"/><rect x="2200" y="128.500" width="23" height="23" rx="3"/><rect x="2224" y="128.500" width="23" height="23" rx="3"/><rect x="2248" y="128.500" width="23" height="23" rx="3"/><rect x="2272" y="128.500" width="23" height="23" rx="3"/><rect x="2296" y="128.500" width="23" height="23" rx="3"/><rect x="2486.500" y="128.500" width="23" height="23" rx="3"/></g>
<use href="#man" x="2019" y="139"/><use href="#bar" x="2043" y="140"/><use href="#tree" x="2067" y="139"/><use href="#cube" x="2091" y="140"/><use href="#brick" x="2115" y="140"/>
<text x="2133" y="144" style="font-size:14px;fill:#d82424">D</text><use href="#scr" x="2141" y="141"/>
<use href="#info" x="2163" y="140"/><use href="#probe" x="2187" y="139"/><use href="#bulb" x="2211" y="139"/><use href="#link" x="2235" y="140"/><use href="#pth" x="2259" y="140"/>
<text x="2274" y="145" class="b" style="font-size:14px;fill:#e0c030;stroke:#3a3000;stroke-width:.5">3D</text>
<use href="#tower" x="2307" y="140"/>
<text x="2492" y="143" style="font-size:14px;fill:#d82424">P</text><use href="#scr" x="2498" y="141"/>
<text x="2516" y="143" style="font-size:14px;fill:#d82424">S</text><use href="#scr" x="2522" y="141"/>
<text x="2540" y="143" style="font-size:14px;fill:#d82424">V</text><use href="#scr" x="2546" y="141"/>

<path d="M2010 164h9l-4.500 6z" fill="#888"/>
<rect x="2023.500" y="160.500" width="15" height="14" fill="none" stroke="#3ac83a" stroke-width="1.300"/><path d="M2027 158.500H2036M2028 167.500h6M2031 164.500v6" stroke="#3ac83a" stroke-width="1.200"/>
<text x="2043" y="172" class="t" textLength="178" lengthAdjust="spacingAndGlyphs" style="fill:#e6e6e6;stroke:#e6e6e6;stroke-width:.3">Helaene_Venomancer_TestLevel</text>
<rect x="2019" y="178" width="539" height="20" fill="#6c6c6c"/>
<path d="M2054 188l3 4 7-8" stroke="#e04030" stroke-width="1.600" fill="none"/>
<use href="#bar" transform="translate(2079 187) scale(.72)"/>
<text x="2092" y="193" class="t" style="fill:#fff">Helaene_Venomancer_DebugMushroom</text><text x="2448" y="193" class="ty" style="fill:#fff">Item</text>
<use href="#dot" x="2059" y="210"/><use href="#probe" transform="translate(2079 210) scale(.72)"/><text x="2092" y="215" class="t">LightProbe_001__000</text><text x="2448" y="215" class="ty">Light Probe</text>
<use href="#dot" x="2059" y="232"/><use href="#tri" x="2079" y="232"/><text x="2092" y="237" class="t">StartPoint_000__001</text><text x="2448" y="237" class="ty">Trigger</text>
<use href="#dot" x="2059" y="254"/><use href="#tri" x="2079" y="254"/><text x="2092" y="259" class="t">StartPoint_001__001</text><text x="2448" y="259" class="ty">Trigger</text>
<use href="#dot" x="2059" y="276"/><use href="#tri" x="2079" y="276"/><text x="2092" y="281" class="t">StartPoint_002__001</text><text x="2448" y="281" class="ty">Trigger</text>
<use href="#dot" x="2059" y="298"/><use href="#tri" x="2079" y="298"/><text x="2092" y="303" class="t">StartPoint_003__001</text><text x="2448" y="303" class="ty">Trigger</text>

<!-- preview -->
<rect x="2005" y="610" width="555" height="18" fill="url(#hd)"/>
<text x="2011" y="624" class="m" style="fill:#e8e8e8">Preview</text>
<use href="#pin" x="2532" y="620"/><use href="#x" x="2549" y="620"/>
<rect x="2005" y="628" width="555" height="25" rx="2" fill="#f6f6f6"/>
<path d="M2009 632v17" stroke="#aaa" stroke-width="2" stroke-dasharray="2 2"/>
<text x="2023" y="646" class="m k">Options</text><text x="2081" y="645" class="m k">&lt;&lt;</text><text x="2107" y="645" class="m k">Rotate</text><text x="2152" y="645" class="m k">&gt;&gt;</text>
<rect x="2174.500" y="629.500" width="22" height="21" fill="#e8f2fb" stroke="#0a78d0"/>
<path d="M2177 633l8-2 8 2v9l-8 6-8-6z" fill="#66729a"/><path d="M2177 633l8 3 8-3M2185 636v12" stroke="#cdd4e8" fill="none"/>
<path d="M2200 633l8-2 8 2v9l-8 6-8-6z" fill="#3e5a6a"/><path d="M2200 633l8 3 8-3M2208 636v12" stroke="#a8c0cc" fill="none"/>
<path d="M2223 633l8-2 8 2v9l-8 6-8-6z" fill="#222"/><path d="M2227 634h4v5h-4zM2233 640h4v5h-4z" fill="#eee"/>
<path d="M2246 633l8-2 8 2v9l-8 6-8-6z" fill="#222"/><path d="M2250 634h4v5h-4zM2256 640h4v5h-4z" fill="#ddd"/>
<path d="M2269 633l8-2 8 2v9l-8 6-8-6z" fill="#a060d0"/><path d="M2278 633l7 0v9l-7 6z" fill="#70c8e0"/>
<path d="M2292 633l8-2 8 2v9l-8 6-8-6z" fill="#9060d0"/><path d="M2300 639l8-6v9l-8 6z" fill="#60d0c8"/>
<path d="M2318 635h11v9h-2v4h-8v-5h-4v-3h3z" fill="#8ac820"/>
<rect x="2339" y="632" width="15" height="15" fill="none" stroke="#4a5a98" stroke-dasharray="3 2"/><text x="2341" y="644" class="b" style="font-size:10px;fill:#5a6aa8">AI</text>
<rect x="2005" y="653" width="555" height="216" fill="#5f5f5f"/>
<svg x="1980" y="600" width="580" height="280" viewBox="0 0 1568 840" preserveAspectRatio="none">
<rect x="68" y="160" width="640" height="37" fill="#6b6b6b"/>
<g stroke="#000" stroke-width="2.200" fill="none">
<path d="M68 226H1568M68 313H1568M68 526H1568M700 179H1568"/>
<path d="M818 160V807"/>
<path d="M215 807L430 526L590 313L660 200M68 510L360 315L540 200M68 345L400 200M68 262L300 190M68 210L180 195"/>
<path d="M1415 807L1205 526L1040 313L930 160M1568 510L1270 313L1040 160M1568 350L1250 160M1568 270L1350 175M1568 210L1450 180"/>
</g>
<path d="M845 526H1010" stroke="#a01818" stroke-width="2.500"/>
<ellipse cx="818" cy="517" rx="28" ry="32" fill="#6a4a25"/>
<path d="M703 400C720 345 790 322 808 312Q820 306 832 312C860 330 920 350 935 395C925 440 880 485 820 488C760 485 715 445 703 400Z" fill="url(#cap)"/>
<rect x="1368" y="189" width="173" height="192" fill="#2589e8"/>
<path d="M1440 283C1450 320 1430 335 1435 355C1445 375 1470 372 1474 350C1478 330 1455 310 1458 283Z" fill="#7a4a1c" stroke="#ead8a0" stroke-width="3"/>
<path d="M1382 260C1400 225 1430 210 1455 203C1490 212 1525 235 1532 262C1500 288 1420 290 1382 260Z" fill="#a89a6a" stroke="#efe4b8" stroke-width="3"/>
</svg>
<text x="2008" y="664" style="fill:#c4c4c4" textLength="228" lengthAdjust="spacingAndGlyphs">Visual  -  Triangle Count: 124  |  Vertex Count: 83</text>

<!-- message log -->
<rect x="47" y="873" width="2513" height="18" fill="url(#hd)"/>
<text x="54" y="888" class="m" style="fill:#ddd" textLength="68" lengthAdjust="spacingAndGlyphs">Message Log</text>
<use href="#pin" x="2535" y="882"/><use href="#x" x="2550" y="882"/>
<rect x="47" y="891" width="2513" height="32" fill="#454545"/>
<path d="M158 894V920M572 894V920M733 894V920" stroke="#333"/>
<rect x="167" y="894" width="30" height="25" rx="3" fill="#5a5a5a" stroke="#333"/><text x="176" y="911" class="m">All</text>
<g fill="none"><path d="M201.500 901.500h10v12h-10zM247.500 901.500h10v12h-10zM302.500 901.500h10v12h-10zM336.500 901.500h10v12h-10zM406.500 901.500h10v12h-10zM453.500 901.500h10v12h-10zM505.500 901.500h10v12h-10z" fill="#333" stroke="#222"/>
<path d="M204 907l2 3 3-6M250 907l2 3 3-6M305 907l2 3 3-6M339 907l2 3 3-6M409 907l2 3 3-6M456 907l2 3 3-6M508 907l2 3 3-6" stroke="#eee" stroke-width="1.200"/></g>
<text x="217" y="911">Code</text><text x="263" y="911">Design</text><text x="318" y="911">Art</text><text x="351" y="911">Animation</text><text x="421" y="911">Script</text><text x="469" y="911">Sound</text><text x="521" y="911">Genome</text>
<rect x="582" y="894" width="38" height="25" rx="3" fill="#575757" stroke="#333"/><text x="588" y="911" class="m" style="font-size:11px">Clear</text>
<rect x="626" y="894" width="98" height="25" rx="3" fill="#575757" stroke="#333"/><text x="632" y="911" class="m" style="font-size:11px" textLength="87" lengthAdjust="spacingAndGlyphs">Copy to clipboard</text>
<text x="746" y="911">Search:</text><rect x="791" y="897" width="176" height="18" fill="#393939"/>
<rect x="47" y="923" width="2513" height="19" fill="#323232"/>
<rect x="47" y="942" width="2513" height="60" fill="#303030"/><rect x="47" y="941" width="2513" height="1" fill="#444"/>
<path d="M105 924V941" stroke="#444"/>
<text x="54" y="936">Category</text><text x="110" y="936">Message</text>
<text x="56" y="954" class="lg">Design</text><text x="112" y="955" class="lg" style="fill:#e2451c">Empty visual resource id found on item 'S_RC_DW_BridgeHelper_WalkOn'! x2</text>
<text x="56" y="970" class="lg">Editor</text><text x="112" y="971" class="lg">Version Control: Retrieving file infos (0/1): 0 ms x2</text>
<text x="56" y="986" class="lg">Editor</text><text x="112" y="987" class="lg">Version Control: Add files (1/1): 0 ms</text>
<path d="M2547 954l3-6 3 6zM2547 990l3 6 3-6z" fill="#777"/><ellipse cx="2550" cy="981" rx="2.500" ry="4" fill="#777"/>
<rect x="47" y="1002" width="2513" height="1" fill="#484848"/>

<!-- bottom bar -->
<rect x="52" y="1011" width="139" height="23" fill="#e4e4e4"/><rect x="53" y="1012" width="18" height="21" fill="url(#grn)"/>
<text x="92" y="1027" style="font-size:9px;fill:#2a2ad8" textLength="59" lengthAdjust="spacingAndGlyphs">14% - 2548MB</text>
<path d="M201 1018h11v13h-11z" fill="none" stroke="#aaa" stroke-width="1.200"/><path d="M214 1021l3-2v10l-3-2z" fill="#aaa"/>
<text x="230" y="1029" class="m b w">X</text><text x="327" y="1029" class="m b w">Y</text><text x="424" y="1029" class="m b w">Z</text><text x="521" y="1029" class="m b w">Name:</text>
<use href="#spin" x="249" y="1011"/><use href="#spin" x="346" y="1011"/><use href="#spin" x="443" y="1011"/>
<text x="251" y="1026" class="in" style="font-size:12px;fill:#1b2b66">0.00</text><text x="348" y="1026" class="in" style="font-size:12px;fill:#1b2b66">0.00</text><text x="445" y="1026" class="in" style="font-size:12px;fill:#1b2b66">0.00</text>
<rect x="568" y="1011" width="1366" height="22" fill="#efefef" stroke="#fff"/>
<text x="571" y="1027" style="font-size:13px;fill:#808080" textLength="247" lengthAdjust="spacingAndGlyphs">Helaene_Venomancer_DebugMushroom</text>
<circle cx="1950" cy="1021" r="7" fill="none" stroke="#aaa" stroke-width="1.300"/><path d="M1950 1011v20M1943 1021h14" stroke="#aaa"/>
<text x="1972" y="1027" class="w">X</text><text x="2069" y="1027" class="w">Y</text><text x="2166" y="1027" class="w">Z</text><text x="2262" y="1027" class="w">Xr</text><text x="2363" y="1027" class="w">Yr</text><text x="2463" y="1027" class="w">Zr</text>
<use href="#spin" x="1992" y="1011"/><use href="#spin" x="2088" y="1011"/><use href="#spin" x="2185" y="1011"/><use href="#spin" x="2285" y="1011"/><use href="#spin" x="2385" y="1011"/><use href="#spin" x="2485" y="1011"/>
<text x="1994" y="1026" class="in">1.75</text><text x="2090" y="1026" class="in">0.00</text><text x="2187" y="1026" class="in">0.81</text><text x="2287" y="1026" class="in">0.00</text><text x="2387" y="1026" class="in">0.00</text><text x="2487" y="1026" class="in">0.00</text>

<!-- dialog -->
<g filter="url(#sh)"><rect x="209" y="232" width="519" height="355" fill="#efefef"/></g>
<rect x="209" y="232" width="519" height="31" fill="#fff"/><rect x="209" y="232" width="519" height="1" fill="#4a8bc4"/>
<text x="217" y="252" class="k" style="font-size:12px">Actions</text>
<rect x="708" y="240" width="19" height="19" fill="#c75050"/><text x="714" y="253" class="b w" style="font-size:10px">x</text>
<rect x="222.500" y="276.500" width="120" height="20" fill="#e4e4e4" stroke="#9a9a9a"/><text x="226" y="291" class="k" style="font-size:12px" textLength="49" lengthAdjust="spacingAndGlyphs">Story_Use</text>
<path d="M330 284l4 4 4-4" stroke="#555" fill="none"/>
<rect x="351" y="275" width="25" height="22" fill="#e1e1e1" stroke="#0078d7" stroke-width="2"/>
<circle cx="363" cy="286" r="8" fill="#58b818" stroke="#2a7a08"/><path d="M358 286h10M363 281v10" stroke="#fff" stroke-width="2"/>
<rect x="381.500" y="274.500" width="26" height="23" fill="#e1e1e1" stroke="#adadad"/>
<circle cx="394" cy="286" r="8" fill="#e01010" stroke="#8a0808"/><path d="M388 286h12" stroke="#fff" stroke-width="2.500"/>
<rect x="222.500" y="303.500" width="186" height="237" fill="#fff" stroke="#828790"/>
<rect x="224" y="305" width="183" height="13" fill="#0078d7"/><text x="226" y="316" class="w" textLength="124" lengthAdjust="spacingAndGlyphs">Send a use event to Osiris</text>
<rect x="415.500" y="276.500" width="300" height="229" fill="#fff" stroke="#777"/>
<rect x="416" y="277" width="299" height="17" fill="#b2b2b2"/><rect x="416" y="294" width="17" height="16" fill="#b2b2b2"/>
<path d="M433 310.500H715M575.500 294V310" stroke="#b0b0b0"/>
<rect x="421" y="282" width="8" height="8" fill="#fff" stroke="#888"/><path d="M423 286h4" stroke="#224"/>
<text x="438" y="290" class="b k">Misc</text>
<text x="438" y="306" class="k" textLength="60" lengthAdjust="spacingAndGlyphs">ActionUsage</text><text x="580" y="306" class="k" textLength="52" lengthAdjust="spacingAndGlyphs">ItemOnUse</text>
<rect x="415.500" y="512.500" width="300" height="28" fill="#efefef" stroke="#666"/><text x="422" y="529" class="b k">Misc</text>
<rect x="223.500" y="553.500" width="72" height="20" fill="#e1e1e1" stroke="#adadad"/><text x="246" y="568" class="v">Apply</text>
<rect x="304.500" y="553.500" width="72" height="20" fill="#e1e1e1" stroke="#adadad"/><text x="322" y="568" class="v">Cancel</text>
<path d="M726 580h1v1h-1zM723 583h1v1h-1zM726 583h1v1h-1zM720 585h1v1h-1zM723 585h1v1h-1zM726 585h1v1h-1z" fill="#999" stroke="#999" stroke-width=".7"/>
<path d="M314.500 452.500V468L318 465L320.500 471L323 470L320.500 464.500H325.500Z" fill="#fff" stroke="#000" stroke-width="1"/>
</svg>
</body></html>
